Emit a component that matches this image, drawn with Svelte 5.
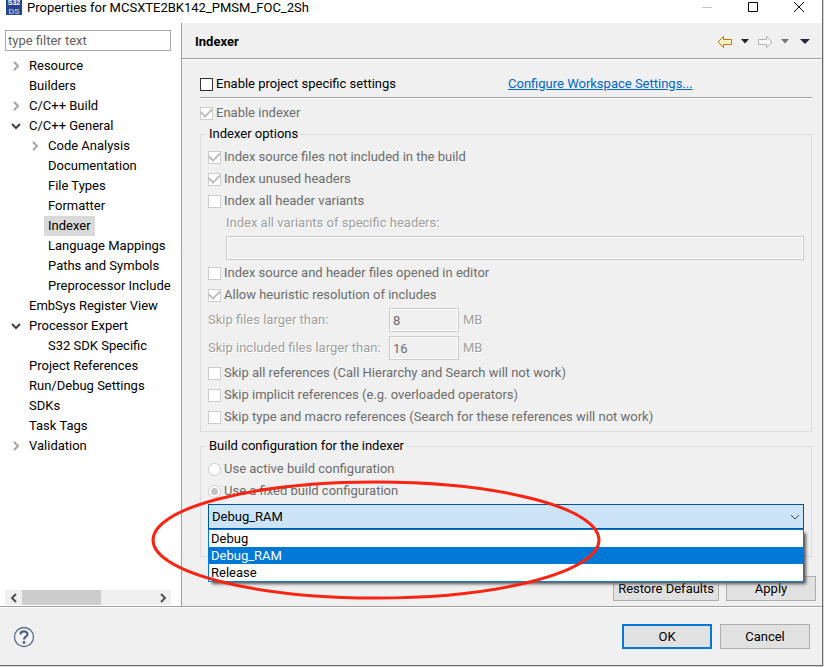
<div class="dialog">
  <header class="titlebar">
    <svg class="logo" width="16" height="17" viewBox="0 0 16 17" aria-hidden="true">
      <rect width="16" height="15" fill="#2b458c" />
      <text x="8" y="5" text-anchor="middle" font-size="7" font-weight="bold" fill="#fff">S32</text>
      <text x="8" y="14" text-anchor="middle" font-size="8" font-weight="bold" fill="#a9b9e2">DS</text>
    </svg>
    <h1>Properties for MCSXTE2BK142_PMSM_FOC_2Sh</h1>
    <div class="window-buttons">
      <button aria-label="Minimize" disabled>
        <svg width="12" height="12" viewBox="0 0 12 12"><path d="M1 6.5h10" stroke="#c4c4c4" /></svg>
      </button>
      <button aria-label="Maximize">
        <svg width="12" height="12" viewBox="0 0 12 12"><path d="M1.5 1.5h9v9h-9z" stroke="#000" fill="none" /></svg>
      </button>
      <button aria-label="Close">
        <svg width="12" height="12" viewBox="0 0 12 12"><path d="M1 1l10 10M11 1L1 11" stroke="#000" /></svg>
      </button>
    </div>
  </header>

  <div class="body">
    <nav class="sidebar">
      <input class="filter" type="text" placeholder="type filter text" aria-label="Filter">
      <ul class="tree">
        {#each pages as page}
          <li class:child={page.level}>
            {#if page.state}
              <button class="twisty" aria-label="Toggle {page.name}">
                {#if page.state === 'open'}
                  <svg width="10" height="10" viewBox="0 0 10 10"><path d="M1 3l4 4 4-4" stroke="#404040" stroke-width="2" fill="none" /></svg>
                {:else}
                  <svg width="10" height="10" viewBox="0 0 10 10"><path d="M3 1l4 4-4 4" stroke="#a6a6a6" stroke-width="2" fill="none" /></svg>
                {/if}
              </button>
            {:else}
              <span class="twisty"></span>
            {/if}
            <button class="page" class:selected={page.name === selected} onclick={() => selected = page.name}>{page.name}</button>
          </li>
        {/each}
      </ul>
      <div class="scrollbar">
        <button aria-label="Scroll left">
          <svg width="10" height="10" viewBox="0 0 10 10"><path d="M7 1L3 5l4 4" stroke="#505050" stroke-width="2" fill="none" /></svg>
        </button>
        <div class="track"><div class="thumb"></div></div>
        <button aria-label="Scroll right">
          <svg width="10" height="10" viewBox="0 0 10 10"><path d="M3 1l4 4-4 4" stroke="#505050" stroke-width="2" fill="none" /></svg>
        </button>
      </div>
    </nav>

    <main>
      <div class="page-title">
        <h2>Indexer</h2>
        <div class="history">
          <button aria-label="Back">
            <svg width="16" height="14" viewBox="0 0 16 14"><path d="M1 7L6.500 1.500V4.500h8v5h-8v3z" fill="#fff6c4" stroke="#b87a14" stroke-linejoin="round" /></svg>
          </button>
          <button aria-label="Back history">
            <svg width="8" height="5" viewBox="0 0 8 5"><path d="M0 0h8L4 4.500z" fill="#222" /></svg>
          </button>
          <button aria-label="Forward">
            <svg width="16" height="14" viewBox="0 0 16 14"><path d="M15 7L9.500 1.500V4.500h-8v5h8v3z" fill="#f6f6f6" stroke="#b0b0b0" stroke-linejoin="round" /></svg>
          </button>
          <button aria-label="Forward history">
            <svg width="8" height="5" viewBox="0 0 8 5"><path d="M0 0h8L4 4.500z" fill="#77777b" /></svg>
          </button>
          <button class="menu" aria-label="View menu">
            <svg width="10" height="6" viewBox="0 0 10 6"><path d="M0 0h10L5 5z" fill="#2b1f45" /></svg>
          </button>
        </div>
      </div>

      <div class="settings">
        <div class="specific">
          <label class="check"><input type="checkbox">Enable project specific settings</label>
          <a href="#workspace">Configure Workspace Settings...</a>
        </div>

        <label class="check"><input type="checkbox" checked disabled>Enable indexer</label>

        <fieldset>
          <legend>Indexer options</legend>
          <label class="check"><input type="checkbox" checked disabled>Index source files not included in the build</label>
          <label class="check"><input type="checkbox" checked disabled>Index unused headers</label>
          <label class="check"><input type="checkbox" disabled>Index all header variants</label>
          <div class="variants">
            <label class="etched" for="variants">Index all variants of specific headers:</label>
            <input id="variants" type="text" disabled>
          </div>
          <label class="check"><input type="checkbox" disabled>Index source and header files opened in editor</label>
          <label class="check"><input type="checkbox" checked disabled>Allow heuristic resolution of includes</label>
          <div class="limits">
            <label class="etched" for="limit">Skip files larger than:</label>
            <input id="limit" type="text" value="8" disabled>
            <span class="etched">MB</span>
            <label class="etched" for="included-limit">Skip included files larger than:</label>
            <input id="included-limit" type="text" value="16" disabled>
            <span class="etched">MB</span>
          </div>
          <label class="check"><input type="checkbox" disabled>Skip all references (Call Hierarchy and Search will not work)</label>
          <label class="check"><input type="checkbox" disabled>Skip implicit references (e.g. overloaded operators)</label>
          <label class="check"><input type="checkbox" disabled>Skip type and macro references (Search for these references will not work)</label>
        </fieldset>

        <fieldset class="build">
          <legend>Build configuration for the indexer</legend>
          <label class="check"><input type="radio" name="build" disabled>Use active build configuration</label>
          <label class="check"><input type="radio" name="build" checked disabled>Use a fixed build configuration</label>
          <div class="combo">
            <select aria-label="Build configuration" bind:value={config}>
              {#each configs as name}
                <option>{name}</option>
              {/each}
            </select>
            <svg class="arrow" width="10" height="6" viewBox="0 0 10 6"><path d="M1 1l4 4 4-4" stroke="#444" fill="none" /></svg>
            <div class="popup">
              {#each configs as name}
                <button class:active={name === config} onclick={() => config = name}>{name}</button>
              {/each}
            </div>
            <svg class="marker" width="450" height="122" viewBox="0 0 450 122" aria-hidden="true">
              <ellipse cx="225" cy="61" rx="223" ry="58" fill="none" stroke="#fb2413" stroke-width="3" />
            </svg>
          </div>
        </fieldset>
      </div>

      <div class="page-buttons">
        <button class="push">Restore Defaults</button>
        <button class="push">Apply</button>
      </div>
    </main>
  </div>

  <footer>
    <button class="help" aria-label="Help">
      <svg width="22" height="22" viewBox="0 0 22 22">
        <circle cx="11" cy="11" r="9.500" fill="#f4f5f8" stroke="#5b6b8f" stroke-width="1.300" />
        <path d="M7.500 8.500C7.500 4.500 14.500 4.500 14.500 8.200C14.500 10.800 11 10.600 11 13.500" fill="none" stroke="#4c5f8c" stroke-width="2.200" />
        <circle cx="11" cy="16.500" r="1.400" fill="#4c5f8c" />
      </svg>
    </button>
    <button class="push default">OK</button>
    <button class="push">Cancel</button>
  </footer>
</div>

<script>
  const pages = [
    { name: 'Resource', state: 'closed' },
    { name: 'Builders' },
    { name: 'C/C++ Build', state: 'closed' },
    { name: 'C/C++ General', state: 'open' },
    { name: 'Code Analysis', level: 1, state: 'closed' },
    { name: 'Documentation', level: 1 },
    { name: 'File Types', level: 1 },
    { name: 'Formatter', level: 1 },
    { name: 'Indexer', level: 1 },
    { name: 'Language Mappings', level: 1 },
    { name: 'Paths and Symbols', level: 1 },
    { name: 'Preprocessor Include', level: 1 },
    { name: 'EmbSys Register View' },
    { name: 'Processor Expert', state: 'open' },
    { name: 'S32 SDK Specific', level: 1 },
    { name: 'Project References' },
    { name: 'Run/Debug Settings' },
    { name: 'SDKs' },
    { name: 'Task Tags' },
    { name: 'Validation', state: 'closed' }
  ]
  const configs = ['Debug', 'Debug_RAM', 'Release']

  let selected = $state('Indexer')
  let config = $state('Debug_RAM')
</script>

<style>
  :global(body) { background: #d4d4d4; }

  .dialog, .dialog * { box-sizing: border-box; }
  .dialog {
    display: flex;
    flex-direction: column;
    min-height: calc(100vh - 1px);
    margin-right: 1px;
    border: solid #6e6e6e;
    border-width: 0 1px 1px 0;

    font: 13px/20px Roboto, sans-serif;
    color: #000;
    background: #f0f0f0;
  }

  button, input, select {
    margin: 0;
    padding: 0;
    border: 0;
    border-radius: 0;
    font: inherit;
    color: inherit;
    background: none;
  }
  svg { display: block; }

  .titlebar {
    display: flex;
    align-items: start;
    height: 23px;
    padding-left: 6px;
    background: #fff;
  }
  .logo { font-family: 'Liberation Sans', sans-serif; }
  h1 {
    flex: 1;
    margin: 0 0 0 5px;
    font-size: 13px;
    font-weight: normal;
    line-height: 16px;
  }
  .window-buttons {
    display: flex;
    gap: 34px;
    padding: 1px 17px 0 0;
  }

  .body {
    display: flex;
    flex: 1;
    border-bottom: 1px solid #a0a0a0;
  }

  .sidebar {
    display: flex;
    flex-direction: column;
    flex: none;
    width: 182px;
    padding: 7px 10px 1px 5px;
    border-right: 1px solid #a0a0a0;
    background: #fff;
  }
  .filter {
    width: 100%;
    height: 21px;
    padding: 0 2px;
    border: 1px solid #a5a5ad;
  }
  .filter::placeholder { color: #5f5f5f; opacity: 1; }
  .tree {
    flex: 1;
    margin: 5px 0 0;
    padding: 0;
    overflow: hidden;
    list-style: none;
  }
  .tree li {
    display: flex;
    align-items: center;
    height: 20px;
    padding-left: 6px;
    white-space: nowrap;
  }
  .tree .child { padding-left: 25px; }
  .twisty { flex: none; width: 14px; }
  .page { padding: 0 4px; }
  .selected { background: #d9d9d9; }

  .scrollbar {
    display: flex;
    align-items: center;
    height: 15px;
    background: #f0f0f0;
  }
  .scrollbar button {
    display: grid;
    place-items: center;
    width: 17px;
  }
  .track { flex: 1; }
  .thumb {
    width: 60%;
    height: 15px;
    background: #cdcdcd;
  }

  main {
    display: flex;
    flex-direction: column;
    flex: 1;
    min-width: 0;
  }
  .page-title {
    display: flex;
    align-items: center;
    justify-content: space-between;
    height: 36px;
    padding: 2px 12px 0 13px;
    border-bottom: 1px solid #a0a0a0;
    box-shadow: 0 1px #fff;
  }
  h2 {
    margin: 0;
    font-size: 13px;
    font-weight: bold;
  }
  .history {
    display: flex;
    align-items: center;
    gap: 8px;
  }
  .menu { margin-left: 3px; }

  .settings {
    flex: 1;
    padding: 15px 10px 0 18px;
  }
  .specific {
    display: flex;
    align-items: center;
    height: 24px;
    margin-bottom: 4px;
    padding-bottom: 3px;
    border-bottom: 1px solid #a0a0a0;
    box-shadow: 0 1px #fff;
  }
  .specific .check { flex: 0 0 308px; }
  a { color: #0066cc; }

  .check {
    display: flex;
    align-items: center;
    gap: 3px;
    height: 22px;
  }
  .check:has(:disabled) { color: #6d6d6d; }
  .check input {
    appearance: none;
    display: grid;
    place-items: center;
    flex: none;
    width: 13px;
    height: 13px;
    border: 1px solid #333;
    background: #fff;
  }
  .check input:disabled { border-color: #ccc; }
  .check [type='checkbox']:checked::after {
    content: '';
    width: 9px;
    height: 5px;
    margin-bottom: 3px;
    border: solid #bcbcbc;
    border-width: 0 0 2px 2px;
    rotate: -45deg;
  }
  .check [type='radio'] { border-radius: 50%; }
  .check [type='radio']:checked::after {
    content: '';
    width: 7px;
    height: 7px;
    border-radius: 50%;
    background: #c4c4c4;
  }

  fieldset {
    min-width: 0;
    margin: 0;
    padding: 2px 7px 3px;
    border: 1px solid #dcdcdc;
  }
  legend {
    margin-left: -2px;
    padding: 0 3px;
  }

  .etched {
    color: #a0a0a0;
    text-shadow: 1px 1px #fff;
  }
  fieldset [type='text'] {
    height: 24px;
    padding: 0 3px;
    border: 1px solid #ccc;
    box-shadow: inset 0 0 0 1px #fff;
    color: #6d6d6d;
  }
  .variants {
    display: flex;
    flex-direction: column;
    gap: 3px;
    padding: 1px 0 2px 18px;
  }
  .limits {
    display: grid;
    grid-template-columns: 177px 70px 1fr;
    align-items: center;
    gap: 4px;
    padding: 2px 0;
    white-space: nowrap;
  }

  .build {
    margin-top: 4px;
    padding-bottom: 27px;
  }
  .combo {
    position: relative;
    margin-top: 2px;
  }
  .combo select {
    appearance: none;
    display: block;
    width: 100%;
    height: 25px;
    padding: 0 3px;
    border: 1px solid #005499;
    background: #cce4f7;
  }
  .arrow {
    position: absolute;
    top: 10px;
    right: 4px;
    pointer-events: none;
  }
  .popup {
    position: absolute;
    top: 25px;
    right: 0;
    left: 0;
    z-index: 1;
    border: 1px solid #0078d7;
    background: #fff;
    box-shadow: 3px 3px 3px -1px #555;
  }
  .popup button {
    display: block;
    width: 100%;
    height: 17px;
    padding: 0 2px;
    line-height: 17px;
    text-align: left;
  }
  .popup .active { color: #fff; background: #0078d7; }
  .marker {
    position: absolute;
    top: -25px;
    left: -57px;
    z-index: 2;
    pointer-events: none;
  }

  .page-buttons {
    display: flex;
    justify-content: end;
    gap: 7px;
    padding: 0 6px 5px 0;
  }
  .push {
    min-width: 90px;
    height: 25px;
    padding: 0 4px;
    border: 1px solid #adadad;
    background: #e1e1e1;
  }
  .default { border: 2px solid #0078d7; }

  footer {
    display: flex;
    align-items: center;
    gap: 8px;
    padding: 16px 12px 16px 13px;
    border-top: 1px solid #fff;
  }
  .help { margin-right: auto; }
</style>
